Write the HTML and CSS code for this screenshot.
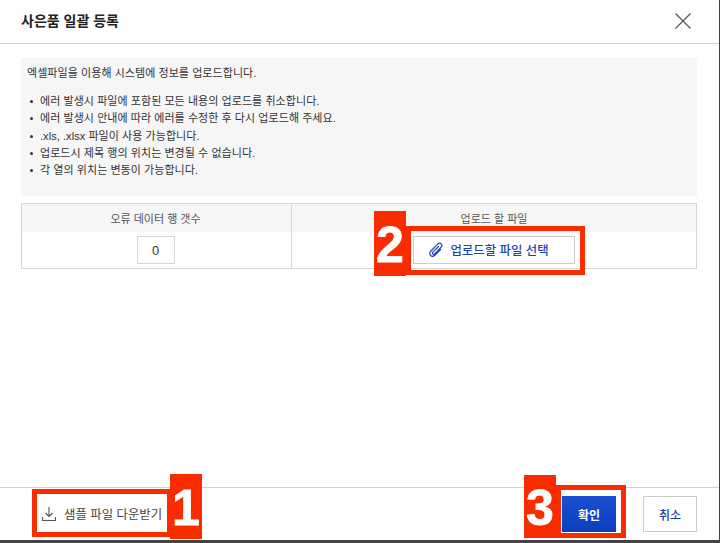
FILE: index.html
```html
<!DOCTYPE html>
<html lang="ko">
<head>
    <meta charset="UTF-8">
    <meta name="viewport" content="width=device-width, initial-scale=1.0">
    <title>사은품 일괄 등록</title>
    <link rel="stylesheet" href="styles.css">
</head>
<body>
    <div class="modal">
        <div class="modal-header">
            <h2>사은품 일괄 등록</h2>
            <svg class="close-icon" width="16" height="16" viewBox="0 0 16 16">
                <path d="M0.5 0.5L15.5 15.5M15.5 0.5L0.5 15.5" stroke="#555" stroke-width="1.3" fill="none"/>
            </svg>
        </div>

        <div class="modal-body">
            <div class="info-box">
                <p class="info-title">엑셀파일을 이용해 시스템에 정보를 업로드합니다.</p>
                <ul class="info-list">
                    <li>에러 발생시 파일에 포함된 모든 내용의 업로드를 취소합니다.</li>
                    <li>에러 발생시 안내에 따라 에러를 수정한 후 다시 업로드해 주세요.</li>
                    <li>.xls, .xlsx 파일이 사용 가능합니다.</li>
                    <li>업로드시 제목 행의 위치는 변경될 수 없습니다.</li>
                    <li>각 열의 위치는 변동이 가능합니다.</li>
                </ul>
            </div>

            <div class="upload-table">
                <div class="cell-head">오류 데이터 행 갯수</div>
                <div class="cell-head">업로드 할 파일</div>
                <div class="cell-body"><span class="count-box">0</span></div>
                <div class="cell-body">
                    <button class="file-btn">
                        <svg width="16" height="16" viewBox="0 0 16 16">
                            <path d="M10.5 4.5L4.8 10.2C4.2 10.8 4.4 11.6 4.9 12C5.4 12.4 6.1 12.3 6.6 11.8L13 5.4C14.2 4.2 14.2 2.8 13.2 1.9C12.2 1 10.8 1.1 9.7 2.2L2.9 9C1.5 10.4 1.4 12.3 2.6 13.5C3.8 14.6 5.6 14.4 7 13L12.5 7.5" stroke="#1a47b8" stroke-width="1.2" fill="none" stroke-linecap="round"/>
                        </svg>
                        업로드할 파일 선택
                    </button>
                </div>
            </div>
        </div>

        <div class="modal-footer">
            <button class="sample-btn">
                <svg width="16" height="16" viewBox="0 0 16 16">
                    <path d="M8 1V10.5M4.5 7L8 10.5L11.5 7M1.5 11V14.5H14.5V11" stroke="#555" stroke-width="1.1" fill="none"/>
                </svg>
                샘플 파일 다운받기
            </button>
            <div class="footer-actions">
                <button class="btn-ok">확인</button>
                <button class="btn-cancel">취소</button>
            </div>
        </div>
    </div>

    <!-- red callouts drawn over the screenshot -->
    <div class="mark-box mark-box-1"></div>
    <div class="mark-num mark-num-1">1</div>
    <div class="mark-box mark-box-2"></div>
    <div class="mark-num mark-num-2">2</div>
    <div class="mark-box mark-box-3"></div>
    <div class="mark-num mark-num-3">3</div>
</body>
</html>
```

FILE: styles.css
```css
* {
    margin: 0;
    padding: 0;
    box-sizing: border-box;
    font-family: "Liberation Sans", "Noto Sans CJK KR", sans-serif;
}

html, body {
    width: 720px;
    height: 543px;
    overflow: hidden;
}

body {
    background-color: #444;
    position: relative;
}

.modal {
    width: 719px;
    height: 540px;
    background-color: #fff;
    display: flex;
    flex-direction: column;
}

.modal-header {
    height: 44px;
    flex-shrink: 0;
    display: flex;
    justify-content: space-between;
    align-items: center;
    padding: 0 28px 3px 21px;
    border-bottom: 1px solid #d2d2d2;
}

.modal-header h2 {
    font-size: 14px;
    font-weight: 700;
    color: #222;
}

.close-icon {
    display: block;
    margin-top: 1px;
}

.modal-body {
    flex: 1;
    padding: 14px 22px 0 21px;
}

.info-box {
    height: 138px;
    background-color: #f6f6f6;
    padding: 8px 6px;
    font-size: 11px;
    letter-spacing: 0.06px;
    color: #333;
}

.info-title {
    line-height: 14px;
    margin-bottom: 13px;
}

.info-list {
    list-style: none;
}

.info-list li {
    line-height: 17.3px;
    padding-left: 13px;
    position: relative;
}

.info-list li::before {
    content: "";
    position: absolute;
    left: 3px;
    top: 7px;
    width: 3px;
    height: 3px;
    border-radius: 50%;
    background-color: #333;
}

.upload-table {
    margin-top: 7px;
    height: 66px;
    display: grid;
    grid-template-columns: 270px 1fr;
    grid-template-rows: 28px 1fr;
    border: 1px solid #d6d6d6;
}

.cell-head {
    background-color: #f6f6f6;
    font-size: 11px;
    color: #555;
    display: flex;
    justify-content: center;
    align-items: center;
}

.cell-body {
    display: flex;
    justify-content: center;
    align-items: center;
}

.cell-head:nth-child(odd),
.cell-body:nth-child(odd) {
    border-right: 1px solid #d6d6d6;
    padding-right: 2px;
}

.count-box {
    width: 38px;
    height: 28px;
    border: 1px solid #d6d6d6;
    display: flex;
    justify-content: center;
    align-items: center;
    font-size: 13px;
    color: #333;
}

.file-btn {
    width: 162px;
    height: 28px;
    padding-right: 11px;
    background-color: #fff;
    border: 1px solid #ccc;
    color: #1a47b8;
    font-size: 12.4px;
    font-weight: 500;
    display: flex;
    justify-content: center;
    align-items: center;
    gap: 6px;
}

.modal-footer {
    height: 53px;
    flex-shrink: 0;
    border-top: 1px solid #d2d2d2;
    display: flex;
    justify-content: space-between;
    align-items: center;
    padding: 0 22px 0 41px;
}

.sample-btn {
    border: none;
    background: none;
    font-size: 12.4px;
    color: #444;
    display: flex;
    align-items: center;
    gap: 7px;
}

.footer-actions {
    display: flex;
    align-items: center;
    gap: 27px;
}

.btn-ok {
    width: 54px;
    height: 36px;
    border: none;
    background: linear-gradient(#1a4fd0, #0b3fc0);
    color: #fff;
    font-size: 12px;
    font-weight: 700;
}

.btn-cancel {
    width: 54px;
    height: 36px;
    background-color: #fff;
    border: 1px solid #ccc;
    color: #1a3f9c;
    font-size: 12px;
    font-weight: 500;
}

.mark-box {
    position: absolute;
    border: 5px solid #f92c00;
}

.mark-box-1 { left: 32px; top: 489px; width: 140px; height: 48px; }
.mark-box-2 { left: 406px; top: 226px; width: 179px; height: 49px; }
.mark-box-3 { left: 556px; top: 485px; width: 70px; height: 53px; }

.mark-num {
    position: absolute;
    width: 32px;
    padding-top: 3px;
    background-color: #f92c00;
    color: #fff;
    font-size: 50px;
    font-weight: 700;
    -webkit-text-stroke: 0.8px #fff;
    display: flex;
    justify-content: center;
    align-items: center;
}

.mark-num-1 { left: 170px; top: 474px; height: 65px; }
.mark-num-2 { left: 374px; top: 211px; height: 65px; }
.mark-num-3 { left: 524px; top: 475px; height: 63px; }
```
